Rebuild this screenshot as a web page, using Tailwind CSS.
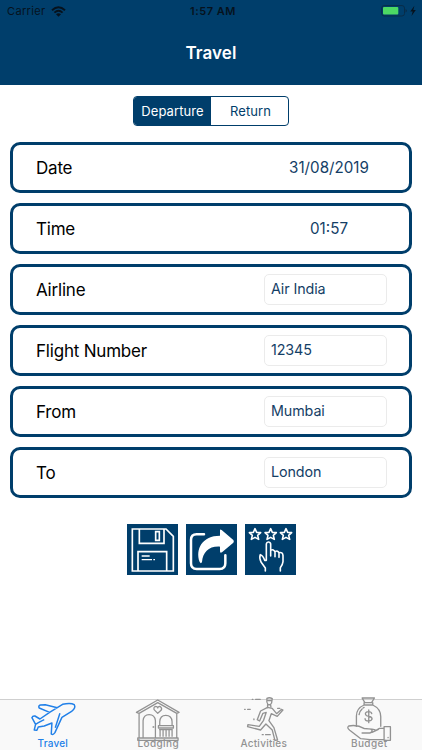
<!DOCTYPE html>
<html lang="en">
<head>
    <meta charset="UTF-8">
    <meta name="viewport" content="width=device-width, initial-scale=1.0">
    <title>Travel</title>
    <script src="https://cdn.jsdelivr.net/npm/@tailwindcss/browser@4"></script>
</head>
<body class="bg-white font-['Inter',sans-serif] antialiased h-[750px] flex flex-col overflow-hidden">

    <!-- Header -->
    <header class="bg-[#003e6b] h-[84.5px] shrink-0">
        <div class="h-[22px] grid grid-cols-3 items-center text-[11px] text-[#06121d]">
            <div class="flex items-center gap-[5px] pl-[7px] tracking-[0.35px]">
                <span>Carrier</span>
                <svg class="w-[15px] h-[11px]" viewBox="0 0 15 11" fill="none" stroke="#06121d" stroke-width="1.9">
                    <path d="M1 4.2Q7.5-1.6 14 4.2M3.4 6.6Q7.5 3 11.6 6.6"/>
                    <path d="M5 8.2Q7.5 6.3 10 8.2L7.5 10.7z" fill="#06121d" stroke="none"/>
                </svg>
            </div>
            <div class="text-center font-semibold tracking-[0.5px] pl-[4px]">1:57 AM</div>
            <div class="flex items-center justify-end pr-[5px]">
                <svg class="w-[37px] h-[12px]" viewBox="0 0 37 12">
                    <rect x="1.7" y=".6" width="22.8" height="10.4" rx="2.5" fill="none" stroke="#082c48"/>
                    <rect x="3" y="2" width="15.3" height="7.6" rx="1" fill="#4cd964"/>
                    <path d="M25.5 4v3.6q1.4-.5 1.4-1.8T25.5 4" fill="#082c48"/>
                    <path d="M34.4.8 30.3 6.5h2.4L31.5 11l4.3-6h-2.5z" fill="#06121d"/>
                </svg>
            </div>
        </div>
        <h1 class="mt-[18px] text-center text-white text-[17px] leading-[26px] font-semibold tracking-[0.1px]">Travel</h1>
    </header>

    <!-- Departure / Return switch -->
    <div class="mt-[11.5px] mx-auto w-[156px] h-[30px] flex shrink-0 border border-[#003e6b] rounded-[4px] overflow-hidden text-[13px] leading-[28px] text-center tracking-[0.1px]">
        <button class="w-[77px] bg-[#003e6b] text-white">Departure</button>
        <button class="flex-1 pl-[2px] text-[#003e6b]">Return</button>
    </div>

    <!-- Trip details -->
    <main class="mt-[16px] pl-[10.4px] pr-[10.4px] flex flex-col gap-[10.1px] text-[#143e66]">
        <div class="h-[51px] border-3 border-[#003e6b] rounded-[10px] flex items-center justify-between pl-[22.6px] pr-[21.6px]">
            <span class="pt-[2px] text-[17px] text-black tracking-[-0.2px]">Date</span>
            <span class="w-[123px] text-center text-[15.2px] pt-[1.5px] pl-[7px]">31/08/2019</span>
        </div>
        <div class="h-[51px] border-3 border-[#003e6b] rounded-[10px] flex items-center justify-between pl-[22.6px] pr-[21.6px]">
            <span class="pt-[2px] text-[17px] text-black tracking-[-0.2px]">Time</span>
            <span class="w-[123px] text-center text-[15.2px] pt-[1.5px] pl-[7px]">01:57</span>
        </div>
        <div class="h-[51px] border-3 border-[#003e6b] rounded-[10px] flex items-center justify-between pl-[22.6px] pr-[21.6px]">
            <span class="pt-[2px] text-[17px] text-black tracking-[-0.2px]">Airline</span>
            <span class="w-[123px] h-[31px] border border-[#ebebeb] rounded-[5px] pl-[6px] text-[14.3px] leading-[28px] tracking-[-0.1px]">Air India</span>
        </div>
        <div class="h-[51px] border-3 border-[#003e6b] rounded-[10px] flex items-center justify-between pl-[22.6px] pr-[21.6px]">
            <span class="pt-px text-[17px] text-black tracking-[-0.2px]">Flight Number</span>
            <span class="w-[123px] h-[31px] border border-[#ebebeb] rounded-[5px] pl-[6px] text-[14.3px] leading-[28px] tracking-[-0.1px]">12345</span>
        </div>
        <div class="h-[51px] border-3 border-[#003e6b] rounded-[10px] flex items-center justify-between pl-[22.6px] pr-[21.6px]">
            <span class="pt-px text-[17px] text-black tracking-[-0.2px]">From</span>
            <span class="w-[123px] h-[31px] border border-[#ebebeb] rounded-[5px] pl-[6px] text-[14.3px] leading-[28px] tracking-[-0.1px]">Mumbai</span>
        </div>
        <div class="h-[51px] border-3 border-[#003e6b] rounded-[10px] flex items-center justify-between pl-[22.6px] pr-[21.6px]">
            <span class="pt-px text-[17px] text-black tracking-[-0.2px]">To</span>
            <span class="w-[123px] h-[31px] border border-[#ebebeb] rounded-[5px] pl-[6px] text-[14.3px] leading-[28px] tracking-[-0.1px]">London</span>
        </div>
    </main>

    <!-- Save, share, rate -->
    <div class="mt-[25.5px] flex justify-center gap-[8px]">
        <button class="bg-[#003e6b] size-[51px]" aria-label="Save">
            <svg class="size-[51px]" viewBox="20 25 153 153" fill="none" stroke="#fff" stroke-width="5">
                <path d="M36 40H137L159 62V166H36zM57 40V83H131V40M106 48H117V74H106zM53 166V108H139V166"/>
                <path d="M64 121H88M64 132H95M99 132H104" stroke-width="4"/>
            </svg>
        </button>
        <button class="bg-[#003e6b] size-[51px]" aria-label="Share">
            <svg class="size-[51px]" viewBox="16 25 153 153">
                <path d="M70 56H48Q31 56 31 73V143Q31 160 48 160H117Q134 160 134 143V119" fill="none" stroke="#fff" stroke-width="7.5" stroke-linecap="round"/>
                <path d="M118 44Q118 39 123 43L158 73Q161 77 158 81L124 110Q118 114 118 107V93C84 91 67 110 64 139Q61 146 57 139C43 100 65 60 118 60z" fill="#fff"/>
            </svg>
        </button>
        <button class="bg-[#003e6b] size-[51px]" aria-label="Rate">
            <svg class="size-[51px]" viewBox="13 25 153 153" fill="none" stroke="#fff" stroke-width="4.8" stroke-linejoin="round" stroke-linecap="round">
                <path id="star" d="M43 39 48 50 60 51 51 59 54 71 43 65 32 71 35 59 26 51 38 50z"/>
                <use href="#star" x="47"/>
                <use href="#star" x="93"/>
                <path d="M74 166V157L61 139Q55 126 59 117Q67 119 72 134H77V85Q78 79 83 79Q89 79 90 85V121M90 104Q99 99 103 109V123M103 108Q112 103 115 112V125M115 111Q126 108 127 120V138Q126 148 119 156V166"/>
            </svg>
        </button>
    </div>

    <!-- Tab bar -->
    <nav class="mt-auto h-[51px] shrink-0 border-t border-[#cfcfcf] bg-[#f9f9f9] grid grid-cols-4 text-[10px] leading-[12px] font-medium text-[#929292] tracking-[0.2px]">
        <a class="relative flex justify-center text-[#2180e8]">
            <svg class="w-[70px] h-[56px] -mt-[6px] shrink-0" viewBox="-6.75 0 210 168" fill="none" stroke="currentColor" stroke-width="4.4" stroke-linejoin="round">
                <path d="M88 55 127 31Q151 25 162 32Q168 42 154 52L125 70 104 116Q98 124 93 120L95 87 72 96 54 99 50 109 42 108 46 91 35 71Q37 65 44 66L59 75 88 55 57 42Q53 36 60 33L75 32 111 41M46 91Q64 80 72 77M119 58 105 101"/>
            </svg>
            <span class="absolute bottom-[1px] left-0 w-full text-center">Travel</span>
        </a>
        <a class="relative flex justify-center">
            <svg class="w-[70px] h-[56px] -mt-[6px] shrink-0" viewBox="-5.25 0 210 168" fill="none" stroke="currentColor" stroke-width="3.8" stroke-linejoin="round">
                <path d="M43 58 35 55 99 18 163 55 156 58M43 58 99 26 156 58V130M43 58V130M39 132H160V139H39zM55 132V80Q57 62 73 62Q90 62 92 80V132M105 95V83Q106 64 123 64Q141 64 142 83V95M101 95H146V102H101zM103 107H144M106 108V128M115 108V128M124 108V128M133 108V128M142 108V128"/>
                <path d="M99 58 88 47Q86 38 93 37Q98 37 99 42Q101 36 107 38Q113 42 109 49z"/>
                <circle cx="86" cy="99" r="1"/>
            </svg>
            <span class="absolute bottom-[1px] left-0 w-full text-center tracking-[0.4px]">Lodging</span>
        </a>
        <a class="relative flex justify-center">
            <svg class="w-[70px] h-[56px] -mt-[6px] shrink-0" viewBox="-3.75 0 210 168" fill="none" stroke="currentColor" stroke-width="4" stroke-linejoin="round" stroke-linecap="round">
                <path d="M110 13Q118 9 126 14L124 27Q119 35 113 31Q108 25 110 13M112 20H125M112 32V41M121 32 122 39"/>
                <path d="M112 40 91 51 81 77 88 81 98 58 108 55 100 79 87 97 53 92 52 98 91 108 107 90 126 108 134 139 142 138 131 101 116 80 123 59 141 67 158 48 154 46 139 59 126 43 112 40"/>
                <path d="M66 16H68M76 16H90M43 46H45M52 46H60M142 43H149M71 75V77M96 122H99M106 122H120"/>
            </svg>
            <span class="absolute bottom-[1px] left-0 w-full text-center tracking-[0.25px]">Activities</span>
        </a>
        <a class="relative flex justify-center">
            <svg class="w-[70px] h-[56px] -mt-[6px] shrink-0" viewBox="-2.25 0 210 168" fill="none" stroke="currentColor" stroke-width="4" stroke-linejoin="round" stroke-linecap="round">
                <path d="M90 25 82 12H119L111 25M88 26H114V33H88zM88 33C70 41 65 54 65 66V97M114 33C133 42 138 55 138 68V97M73 62Q74 52 82 45M85 42 88 40"/>
                <path d="M111 59Q110 53 101 53Q91 54 92 60Q93 66 102 67Q112 68 112 75Q110 81 102 81Q91 81 91 74M102 48V86"/>
                <path d="M148 98H167V139H148zM148 103H134L124 109Q116 105 89 104Q67 91 42 96Q35 101 45 109L78 134 106 137H148M91 104Q107 103 112 108Q113 116 105 117H82M112 115 131 106M160 130V131"/>
            </svg>
            <span class="absolute bottom-[1px] left-0 w-full text-center tracking-[0.35px]">Budget</span>
        </a>
    </nav>

</body>
</html>
